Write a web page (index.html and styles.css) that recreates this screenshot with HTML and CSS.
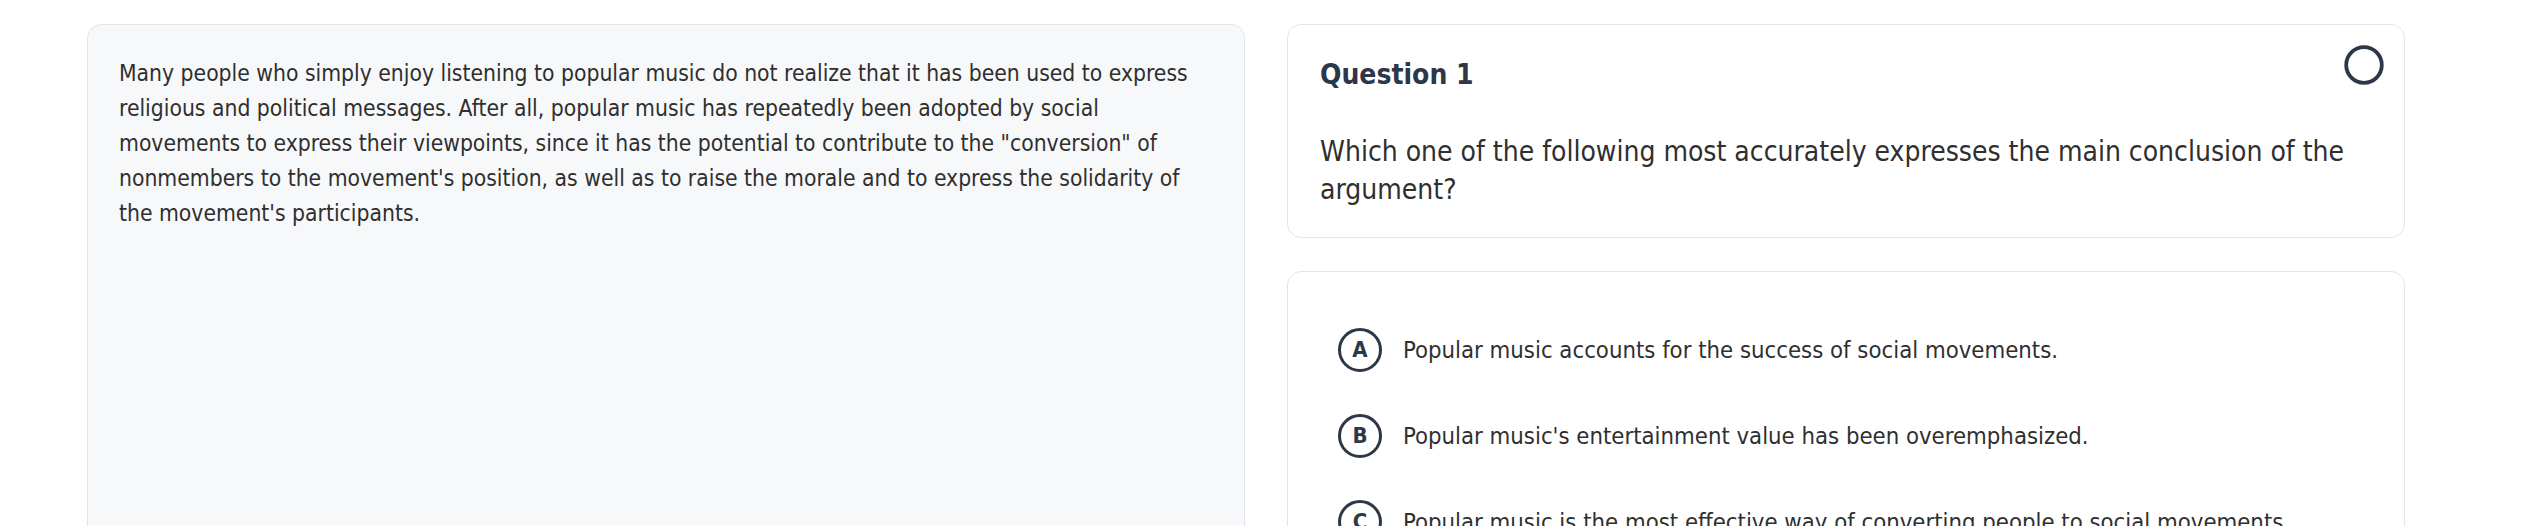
FILE: index.html
```html
<!DOCTYPE html>
<html lang="en">
<head>
<meta charset="utf-8">
<title>Question 1</title>
<link rel="stylesheet" href="styles.css">
</head>
<body>
<main class="layout">
  <section class="passage">
    <p class="passage-text">Many people who simply enjoy listening to popular music do not realize that it has been used to express religious and political messages. After all, popular music has repeatedly been adopted by social movements to express their viewpoints, since it has the potential to contribute to the "conversion" of nonmembers to the movement's position, as well as to raise the morale and to express the solidarity of the movement's participants.</p>
  </section>
  <section class="question-col">
    <div class="card question-card">
      <h2 class="question-title">Question 1</h2>
      <p class="question-text">Which one of the following most accurately expresses the main conclusion of the argument?</p>
      <span class="flag" aria-hidden="true">
        <svg width="40" height="40" viewBox="0 0 40 40"><circle cx="20" cy="20" r="17.8" fill="none" stroke="#2d3748" stroke-width="3.8"/></svg>
      </span>
    </div>
    <div class="card answers-card">
      <div class="answer"><span class="letter">A</span><span class="answer-text">Popular music accounts for the success of social movements.</span></div>
      <div class="answer"><span class="letter">B</span><span class="answer-text">Popular music's entertainment value has been overemphasized.</span></div>
      <div class="answer"><span class="letter">C</span><span class="answer-text">Popular music is the most effective way of converting people to social movements.</span></div>
      <div class="answer"><span class="letter">D</span><span class="answer-text">Popular music has been used to express religious and political messages.</span></div>
    </div>
  </section>
</main>
</body>
</html>
```
FILE: styles.css
```css
* { box-sizing: border-box; }
html, body { margin: 0; padding: 0; background: #ffffff; }
body {
  font-family: "DejaVu Sans Condensed", "DejaVu Sans", sans-serif;
  color: #2f2f2f;
  overflow: hidden;
}
.layout {
  display: grid;
  grid-template-columns: 1158px 1118px;
  column-gap: 42px;
  padding: 24px 0 0 87px;
  align-items: start;
}
.passage {
  background: #f7f8fa;
  border: 1px solid #e2e6eb;
  border-radius: 14px;
  padding: 31px 32px 31px 31px;
  min-height: 700px;
}
.passage-text {
  margin: 0;
  font-size: 22.7px;
  line-height: 35px;
}
.question-col {
  display: flex;
  flex-direction: column;
  gap: 33px;
}
.card {
  background: #ffffff;
  border: 1px solid #e2e6eb;
  border-radius: 14px;
}
.question-card {
  position: relative;
  padding: 32px 32px 28px;
}
.question-title {
  margin: 0 0 40px;
  font-size: 28px;
  line-height: 36px;
  font-weight: 700;
  color: #2d3748;
}
.question-text {
  margin: 0;
  font-size: 28px;
  line-height: 38px;
}
.flag {
  position: absolute;
  top: 20px;
  right: 20px;
  width: 40px;
  height: 40px;
  display: block;
}
.flag svg { display: block; }
.answers-card {
  padding: 35px 32px 35px 32px;
  min-height: 400px;
}
.answer {
  display: flex;
  align-items: center;
  gap: 21px;
  padding: 21px 18px;
}
.letter {
  flex: none;
  width: 44px;
  height: 44px;
  border: 3.8px solid #2d3748;
  border-radius: 50%;
  display: flex;
  align-items: center;
  justify-content: center;
  font-weight: 700;
  font-size: 22px;
  line-height: 1;
  color: #2d3748;
}
.answer-text {
  font-size: 23.7px;
  line-height: 32px;
}
```
